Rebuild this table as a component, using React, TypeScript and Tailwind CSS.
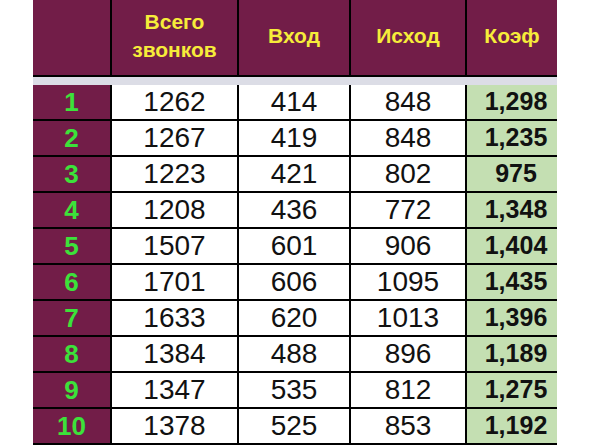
const rows = [
  [1, 1262, 414, 848, "1,298"],
  [2, 1267, 419, 848, "1,235"],
  [3, 1223, 421, 802, "975"],
  [4, 1208, 436, 772, "1,348"],
  [5, 1507, 601, 906, "1,404"],
  [6, 1701, 606, 1095, "1,435"],
  [7, 1633, 620, 1013, "1,396"],
  [8, 1384, 488, 896, "1,189"],
  [9, 1347, 535, 812, "1,275"],
  [10, 1378, 525, 853, "1,192"],
];

export default function App() {
  return (
    <div className="w-[591px] h-[446px] bg-white overflow-hidden font-['Liberation_Sans',Arial,sans-serif]">
      <div className="ml-[33px] w-[524px]">
        {/* header */}
        <div className="flex h-[77px] bg-[#721d48] border-b-2 border-black text-[#f6ec3a] font-bold text-[21px]">
          <div className="w-[79px] border-r-2 border-black" />
          <div className="w-[127px] border-r-2 border-black flex items-center justify-center text-center leading-[28px] pb-1">
            Всего
            <br />
            звонков
          </div>
          <div className="w-[112px] border-r-2 border-black flex items-center justify-center pb-1">Вход</div>
          <div className="w-[116px] border-r-2 border-black flex items-center justify-center pb-1">Исход</div>
          <div className="w-[90px] flex items-center justify-center pb-1">Коэф</div>
        </div>
        <div className="h-[8px] bg-[#dcdde6]" />

        {rows.map((r) => (
          <div key={r[0]} className="flex h-[36px] border-b-2 border-black text-[#111]">
            <div className="w-[79px] border-r-2 border-black bg-[#721d48] text-[#3ce23a] font-bold text-[26px] flex items-center justify-center">
              {r[0]}
            </div>
            <div className="w-[127px] border-r-2 border-black flex items-center justify-center text-[28px]">{r[1]}</div>
            <div className="w-[112px] border-r-2 border-black flex items-center justify-center text-[28px]">{r[2]}</div>
            <div className="w-[116px] border-r-2 border-black flex items-center justify-center text-[28px]">{r[3]}</div>
            <div className="w-[90px] bg-[#c4dfb2] flex items-center justify-center pl-2 font-bold text-[25px]">{r[4]}</div>
          </div>
        ))}
      </div>
    </div>
  );
}
